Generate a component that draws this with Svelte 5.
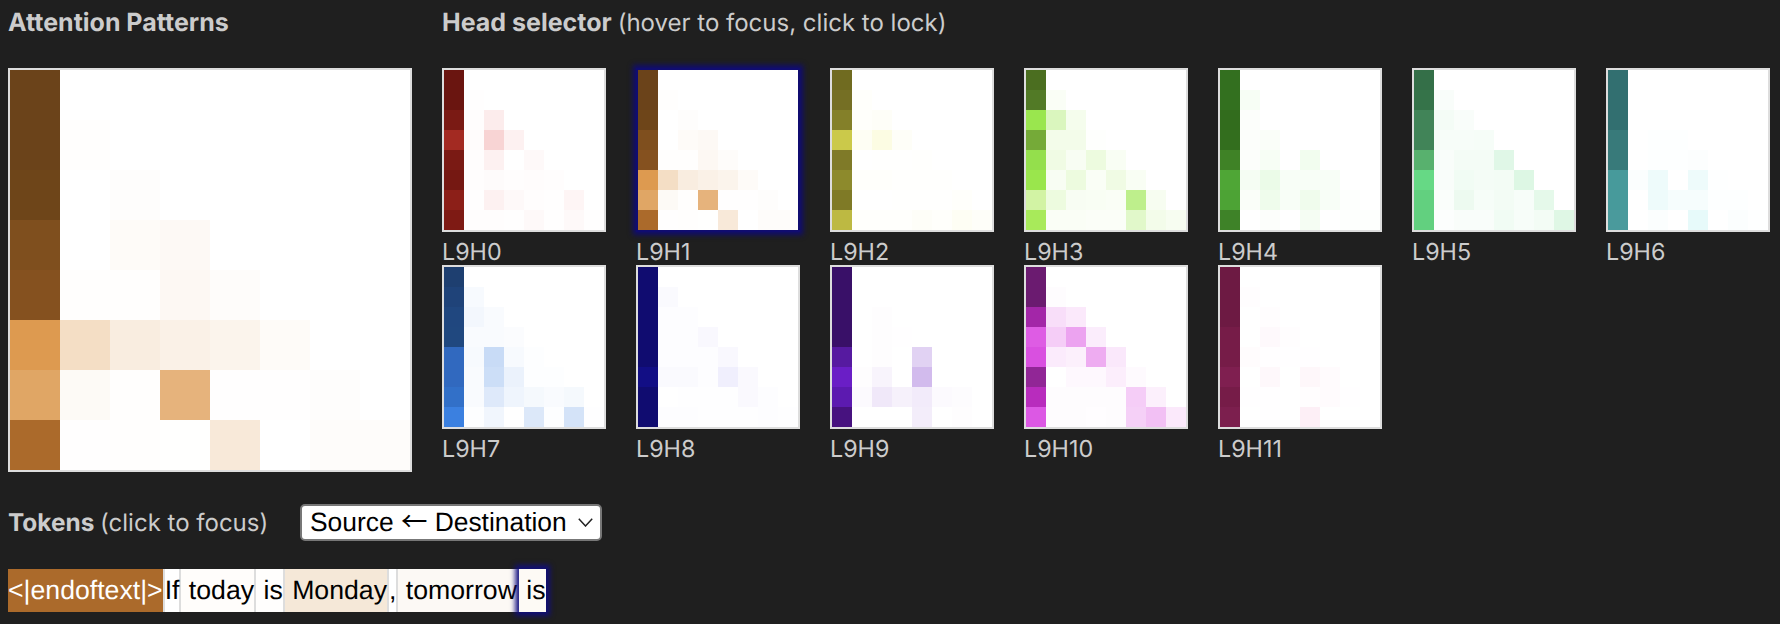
<script>
  const rows = (s) => s.split('|').map((r) => r.split(' ').filter(Boolean).map(Number));
  const mk = (label, tint, first, data) => ({ label, tint, first: first.split(' '), data: rows(data) });
  const heads = [
    mk('L9H0', [225, 60, 60], '#6a1510 #6a1510 #7a1a14 #a32a22 #7a1a14 #751812 #8c1f18 #7e1a14',
      '|0.5|1 10|1.5 22 7|1 7 0 3|1 2 1 1.5 0.8|0.5 7 3 1 0.3 5|1 1 0.5 3 0.3 3 0.5'),
    mk('L9H1', [221, 154, 80], '#6b431a #6b431a #6e4519 #7f4f1e #85511f #dd9a50 #e0a665 #ab6a2b',
      '|1|0 1.5|0 4 6|1 1 7 3|33 18 14 11 4|5 1 75 0.5 0.5 2 0|0.5 1 0.3 22 0 3 3'),
    mk('L9H2', [235, 235, 70], '#706b20 #756f24 #848029 #cbc94a #7f7a28 #8d8a2c #7f7a26 #bdb942',
      '|2|2 4|6 15 4|0 0.5 0.5 1|2 2 1 1 1|0 0 0.5 0.5 0.5 2|1.5 1.5 1.5 4 2 6 3'),
    mk('L9H3', [155, 231, 78], '#4b6e20 #527a26 #9ae64e #75aa38 #94df4c #9ae64c #d2f3a4 #a8ea5a',
      '|5|37 10|12 12 1|15 7 18 6|7 18 5 15 6|18 7 6 5 65 8|5 5 4 4 30 12 8'),
    mk('L9H4', [90, 225, 60], '#336f1f #33701f #326c1d #336e1e #3f8226 #4fa636 #4da335 #3e8228',
      '|5|2|2 3|2 5 0 8|6 12 4 4 4|3 10 4 9 4 1|0 2 0 6 0 1 1'),
    mk('L9H5', [102, 217, 133], '#346f48 #357349 #418458 #418458 #58b16e #66d985 #62d07f #62d07f',
      '|4|7 4|5 5 6|4 7 7 20|4 9 7 8 22|3 12 6 8 5 17|2 4 4 9 5 8 21'),
    mk('L9H6', [70, 215, 215], '#326f70 #326f70 #326f70 #387a7a #387a7a #479a9b #479a9b #4a9a9c',
      '||| 0 1 1|0 1 1 1.5|2 9 0 9 0.5|0 9 5 5 1 1|0 2 0 13 0 2 0.5'),
    mk('L9H7', [59, 127, 224], '#1e3f70 #1f4379 #20477f #20487f #3169bf #3169bf #3270c8 #3b80e0',
      '|4|6 3|3 3 2|4 28 4 1|3 26 10 1 1|3 17 8 5 3 5|1 7 0 18 1 22 0.5'),
    mk('L9H8', [100, 90, 230], '#100c70 #100c70 #100c70 #100c70 #100c70 #120e85 #100c70 #100c70',
      '|3|1.5 1.5|1.5 1.5 4|1.5 1.5 1.5 4|3 3 1.5 10 3.5|0 0.7 0.7 0.7 3.5 1.5|1.5 1.5 0.7 0.7 0.7 1.5 0.4'),
    mk('L9H9', [106, 29, 196], '#391068 #391068 #391068 #391068 #561aa0 #6a1ec6 #5c1ab0 #47127f',
      '||0 1|0 1 0.3|0 1 0 20|1 5 0 30|2 10 6 9 2 1.5|0 0 0 8 0 1'),
    mk('L9H10', [221, 88, 227], '#6b1b70 #6b1b70 #a326a8 #de5ce4 #d950e0 #912696 #b82cbd #dc58e4',
      '|2|20 13|30 55 11|12 9 50 14|0 4 4 10 3|2 2 2 2 30 9|2 2 1 2 28 38 13'),
    mk('L9H11', [230, 60, 140], '#6d1a43 #6d1a43 #6d1a43 #761c48 #761c48 #7f1f50 #761c48 #7c1f4e',
      '|1|0 1|0 3 1|1.5 0.3 0.3 0.3|0 3.5 0 4 2|0.4 0.4 0.2 1 2 0.3|0 0.3 0 8')
  ];
  const cellColor = (head, r, c) => {
    if (c === 0) return head.first[r];
    const v = head.data[r]?.[c - 1] ?? 0;
    const m = head.tint.map((t) => Math.round(255 + ((t - 255) * v) / 100));
    return `rgb(${m[0]},${m[1]},${m[2]})`;
  };
  const idx = [0, 1, 2, 3, 4, 5, 6, 7];
  const focused = heads[1];
  const tokens = [
    { t: '<|endoftext|>', bg: '#ab6a2b', fg: '#fff' },
    { t: 'If', bg: '#fff' },
    { t: ' today', bg: '#fffdfb' },
    { t: ' is', bg: '#fffefd' },
    { t: ' Monday', bg: '#f5e8d8' },
    { t: ',', bg: '#fff' },
    { t: ' tomorrow', bg: '#fcf9f5' },
    { t: ' is', bg: '#fdfaf5', active: true }
  ];
</script>

<div class="page">
  <div class="top">
    <section class="left">
      <h4>Attention Patterns</h4>
      <div class="map big">
        {#each idx as r}{#each idx as c}<i style="background:{cellColor(focused, r, c)}"></i>{/each}{/each}
      </div>
    </section>
    <section class="right">
      <h4>Head selector <span>(hover to focus, click to lock)</span></h4>
      <div class="heads">
        {#each heads as head}
          <div class="head">
            <div class="map small" class:locked={head.label === 'L9H1'}>
              {#each idx as r}{#each idx as c}<i style="background:{cellColor(head, r, c)}"></i>{/each}{/each}
            </div>
            <div class="label">{head.label}</div>
          </div>
        {/each}
      </div>
    </section>
  </div>
  <div class="tokens-head">
    <h4>Tokens <span>(click to focus)</span></h4>
    <div class="select">
      <span>Source <span class="arrow">←</span> Destination</span>
      <svg width="15" height="9" viewBox="0 0 15 9"><path d="M.8.8 7.5 8 14.2.8" fill="none" stroke="#222" stroke-width="1.5"/></svg>
    </div>
  </div>
  <div class="tokens">
    {#each tokens as tok}
      <span class="tok" class:active={tok.active} style="background:{tok.bg};color:{tok.fg ?? '#000'}">{tok.t}</span>
    {/each}
  </div>
</div>

<style>
  :global(body) {
    margin: 0;
    background: #1f1f1f;
  }
  .page {
    width: 1780px;
    height: 624px;
    overflow: hidden;
    box-sizing: border-box;
    padding: 8px 0 0 8px;
    color: #ccc;
    font-family: Inter, "Liberation Sans", sans-serif;
    text-rendering: geometricPrecision;
  }
  .top {
    display: flex;
    gap: 30px;
  }
  h4 {
    margin: 0;
    font-size: 25px;
    line-height: 30px;
    font-weight: 700;
    color: #ccc;
    white-space: nowrap;
  }
  h4 span {
    font-weight: 400;
    font-size: 24px;
  }
  .left h4,
  .right h4 {
    margin-bottom: 30px;
  }
  .map {
    display: grid;
    border: 2px solid #ddd;
  }
  .map i {
    display: block;
  }
  .big {
    grid-template: repeat(8, 50px) / repeat(8, 50px);
  }
  .small {
    grid-template: repeat(8, 20px) / repeat(8, 20px);
  }
  .locked {
    border-color: #100c70;
    box-shadow: 0 0 5px 3px #100c70;
  }
  .heads {
    display: grid;
    grid-template-columns: repeat(7, 164px);
    column-gap: 30px;
  }
  .head {
    height: 197px;
  }
  .label {
    font-size: 23.3px;
    line-height: 33px;
    padding-top: 3px;
    color: #ccc;
  }
  .tokens-head {
    display: flex;
    align-items: center;
    justify-content: space-between;
    width: 594px;
    margin-top: 32px;
    height: 37px;
  }
  .tokens-head h4 {
    font-size: 24.4px;
  }
  .select {
    box-sizing: border-box;
    height: 37px;
    width: 302px;
    display: flex;
    align-items: center;
    justify-content: space-between;
    padding: 0 7px 0 8px;
    background: #fff;
    color: #000;
    border: 2px solid #777;
    border-radius: 5px;
    font-family: "Liberation Sans", sans-serif;
    font-size: 26.4px;
    white-space: nowrap;
  }
  .arrow {
    font-family: "Noto Sans CJK JP", sans-serif;
    line-height: 1;
  }
  .tokens {
    display: flex;
    margin-top: 28px;
    height: 43px;
  }
  .tok {
    display: block;
    height: 43px;
    line-height: 43px;
    font-family: "Liberation Sans", sans-serif;
    font-size: 26.67px;
    white-space: pre;
    border-right: 2px solid #ddd;
  }
  .tok.active {
    border-right: none;
    box-shadow: 0 0 5px 4px rgba(16, 12, 128, 0.9);
    position: relative;
  }
</style>
